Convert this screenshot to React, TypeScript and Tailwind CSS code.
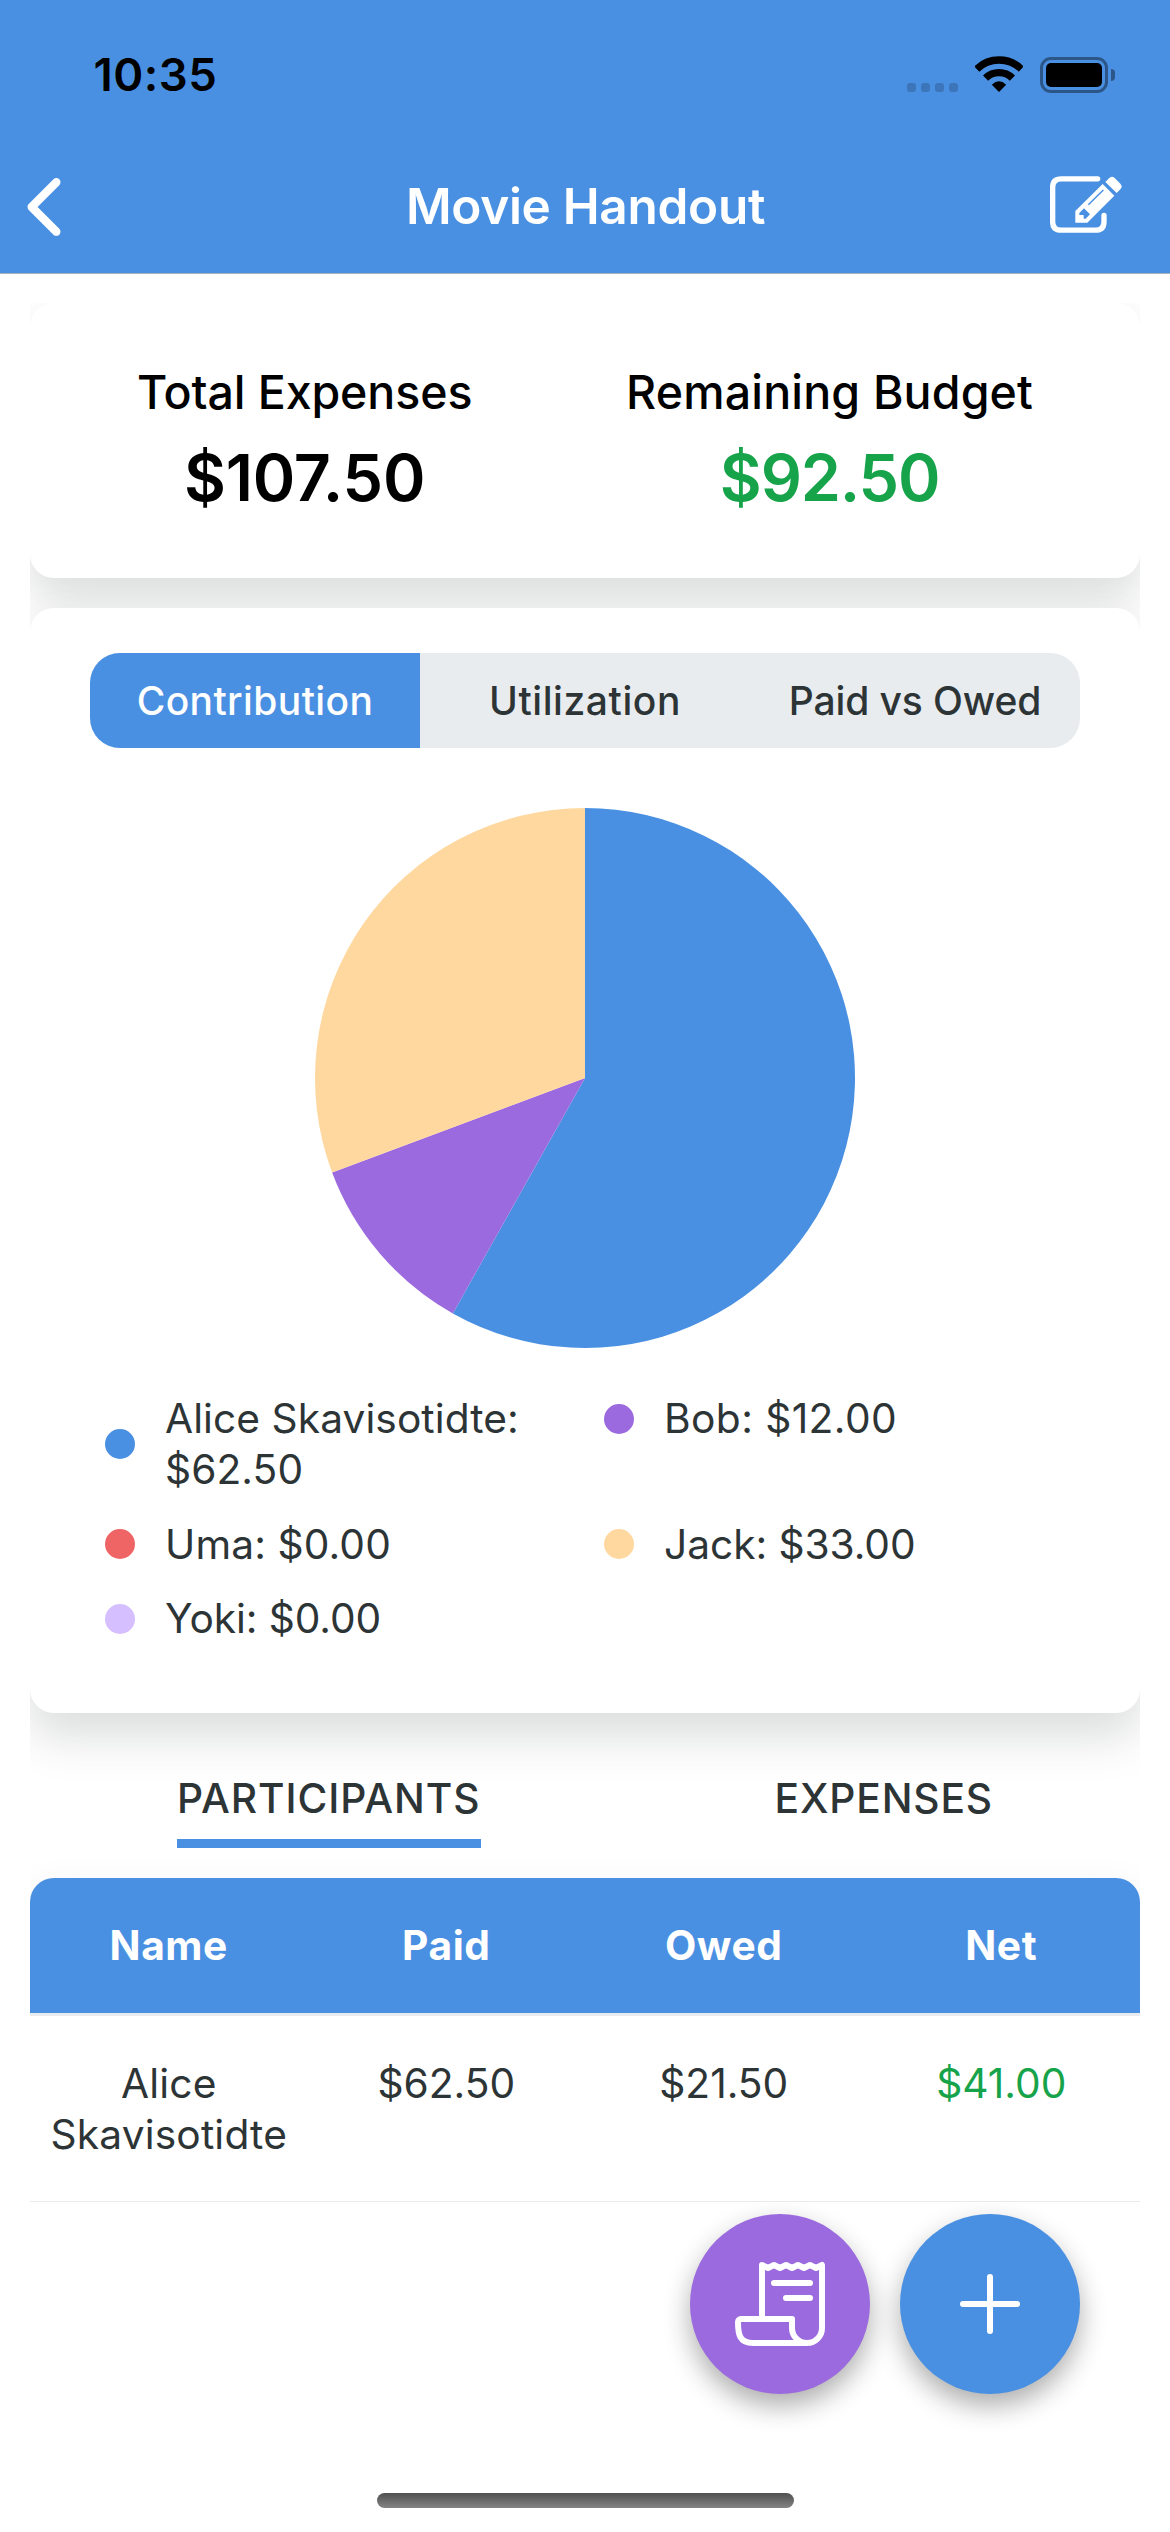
import type { ReactNode } from "react";
import { clsx } from "clsx";
import { IoAdd, IoChevronBack, IoReceiptOutline } from "react-icons/io5";

function WifiIcon() {
  return (
    <svg className="h-9 w-12" viewBox="285 75 144 108" fill="none" stroke="#000" strokeWidth="22">
      <path d="M290.3 114A96 96 0 0 1 423.7 114" />
      <path d="M316.7 141.3A58 58 0 0 1 397.3 141.3" />
      <path d="M357 183L335.5 161Q357 141 378.5 161Z" fill="#000" stroke="none" />
    </svg>
  );
}

function EditIcon() {
  return (
    <svg className="h-[63px] w-[75px]" viewBox="501 429 225 189" fill="none">
      <path
        d="M653 446.5H544Q518 446.5 518 472V575Q518 600.500 544 600.500H646Q672 600.500 672 575V556"
        stroke="#fff"
        strokeWidth="16"
        strokeLinecap="round"
      />
      <path d="M668 462L703 497L622 578H586V543Z" fill="#fff" />
      <path d="M676 456L687 445Q695 436 704 444L721 461Q729 470 721 478L710 489Z" fill="#fff" />
      <path d="M625 524L670 480" stroke="#4A90E2" strokeWidth="4.500" />
      <path d="M612 535L630 553L617 566H611V555H598V549Z" fill="#4A90E2" />
    </svg>
  );
}

function StatusBar() {
  return (
    <div className="flex h-[149px] items-center justify-between pr-[55px] pl-[93.5px]">
      <span className="text-[45.5px] leading-none font-semibold tracking-[0.011em] text-black">10:35</span>
      <div className="flex items-start">
        <div className="mt-[27px] flex gap-[5px]">
          {[0, 1, 2, 3].map((dot) => (
            <i key={dot} className="size-[9px] rounded-[3px] bg-[#3c75ba]" />
          ))}
        </div>
        <div className="ml-[17px]">
          <WifiIcon />
        </div>
        <div className="mt-px ml-[17px] flex items-center gap-[3px]">
          <div className="h-9 w-[68px] rounded-[11px] border-3 border-[#2c5687] p-[3px]">
            <div className="h-full rounded-[5px] bg-black" />
          </div>
          <div className="h-3 w-1 rounded-r-full bg-[#2c5687]" />
        </div>
      </div>
    </div>
  );
}

function NavBar() {
  return (
    <div className="flex h-[116px] items-center justify-between pr-[48px]">
      <IoChevronBack className="size-[88px] text-white" />
      <h1 className="ml-9 text-[49.5px] leading-none font-semibold tracking-[-0.006em] text-white">Movie Handout</h1>
      <div className="-mt-[5px]">
        <EditIcon />
      </div>
    </div>
  );
}

function Card({ className, children }: { className?: string; children: ReactNode }) {
  return (
    <section className={clsx("rounded-3xl bg-white shadow-[0_24px_45px_rgba(45,52,54,0.17)]", className)}>
      {children}
    </section>
  );
}

const slices = [
  { color: "#4A90E2", value: 62.5 },
  { color: "#9B6ADE", value: 12 },
  { color: "#FFD8A0", value: 33 },
];

function PieChart() {
  const total = slices.reduce((sum, s) => sum + s.value, 0);
  const point = (value: number) => {
    const a = (value / total) * Math.PI * 2;
    return `${270 + 270 * Math.sin(a)} ${270 - 270 * Math.cos(a)}`;
  };
  let start = 0;
  return (
    <svg className="size-[540px]" viewBox="0 0 540 540">
      {slices.map((s) => {
        const end = start + s.value;
        const d = `M270 270L${point(start)}A270 270 0 ${s.value / total > 0.5 ? 1 : 0} 1 ${point(end)}Z`;
        start = end;
        return <path key={s.color} d={d} fill={s.color} />;
      })}
    </svg>
  );
}

const legend = [
  { dot: "bg-[#4A90E2]", text: "Alice Skavisotidte: $62.50", tracking: "tracking-[0.0017em]" },
  { dot: "bg-[#9B6ADE]", text: "Bob: $12.00", tracking: "tracking-[0.01em]" },
  { dot: "bg-[#EF6565]", text: "Uma: $0.00", tracking: "tracking-[0.003em]" },
  { dot: "bg-[#FFD8A0]", text: "Jack: $33.00", tracking: "tracking-[-0.0015em]" },
  { dot: "bg-[#D6BFFF]", text: "Yoki: $0.00", tracking: "tracking-[-0.002em]" },
];

const headings = ["Name", "Paid", "Owed", "Net"];

export default function App() {
  return (
    <main className="relative flex h-[2532px] w-[1170px] flex-col overflow-hidden bg-white font-['Inter',sans-serif] text-[#2D3436]">
      <header className="h-[274px] shrink-0 border-b border-[#a9b1bb] bg-[#4A90E2]">
        <StatusBar />
        <NavBar />
      </header>

      <div className="mx-[30px] mt-[29px] min-h-0 flex-1 overflow-hidden">
        <Card className="flex h-[275px] justify-around px-[30px] pt-[59px]">
          <div className="text-center text-black">
            <p className="text-[46.5px] leading-[60px] font-medium tracking-[-0.002em]">Total Expenses</p>
            <p className="mt-[17px] text-[64.5px] leading-[78px] font-semibold tracking-[-0.003em]">$107.50</p>
          </div>
          <div className="text-center">
            <p className="text-[46.5px] leading-[60px] font-medium tracking-[0.0036em] text-black">Remaining Budget</p>
            <p className="mt-[17px] text-[64.5px] leading-[78px] font-semibold tracking-[-0.018em] text-[#16A34A]">$92.50</p>
          </div>
        </Card>

        <Card className="mt-[30px] flex h-[1105px] flex-col items-center pt-[45px]">
          <div className="grid h-[95px] w-[990px] grid-cols-3 overflow-hidden rounded-[30px] bg-[#E8ECEF] text-center text-[39px] leading-[96px] font-[550]">
            <span className="bg-[#4A90E2] tracking-[0.01em] text-white">Contribution</span>
            <span className="tracking-[0.015em]">Utilization</span>
            <span className="tracking-[-0.003em]">Paid vs Owed</span>
          </div>
          <div className="mt-[60px]">
            <PieChart />
          </div>
          <ul className="mt-[45px] grid w-[960px] grid-cols-[469px_461px] gap-x-[30px] gap-y-[23.5px] text-[40.7px] leading-[51px]">
            {legend.map((item) => (
              <li key={item.text} className="flex items-center gap-[30px] self-start">
                <i className={clsx("size-[30px] shrink-0 rounded-full", item.dot)} />
                <span className={clsx("max-w-[380px]", item.tracking)}>{item.text}</span>
              </li>
            ))}
          </ul>
        </Card>

        <nav className="mt-[60px] flex h-[75px] items-start justify-around text-[40.7px] leading-[51px] font-[550]">
          <span className="h-full border-b-9 border-[#4A90E2] tracking-[0.023em]">PARTICIPANTS</span>
          <span className="tracking-[0.021em]">EXPENSES</span>
        </nav>

        <Card className="mt-[30px] h-[900px] overflow-hidden text-center text-[40.7px]">
          <div className="h-[138px] border-b-3 border-[#E9ECEF]">
            <div className="grid h-full grid-cols-4 bg-[#4A90E2] leading-[135px] font-bold tracking-[0.015em] text-white">
              {headings.map((heading) => (
                <span key={heading}>{heading}</span>
              ))}
            </div>
          </div>
          <div className="grid h-[186px] grid-cols-4 border-b border-[#E9ECEF] pt-[42px] leading-[51px]">
            <span className="px-4 tracking-[0.004em]">Alice Skavisotidte</span>
            <span>$62.50</span>
            <span>$21.50</span>
            <span className="text-[#16A34A]">$41.00</span>
          </div>
        </Card>
      </div>

      <div className="absolute right-[90px] bottom-[138px] flex gap-[30px] text-white">
        <button className="flex size-[180px] items-center justify-center rounded-full bg-[#9B6ADE] shadow-[0_12px_27px_rgba(0,0,0,0.32)]">
          <IoReceiptOutline className="size-24" />
        </button>
        <button className="flex size-[180px] items-center justify-center rounded-full bg-[#4A90E2] shadow-[0_12px_27px_rgba(0,0,0,0.32)]">
          <IoAdd className="size-24" />
        </button>
      </div>
      <div className="absolute bottom-6 left-[377px] h-[15px] w-[417px] rounded-full bg-linear-to-b from-[#505050] to-[#848484]" />
    </main>
  );
}
